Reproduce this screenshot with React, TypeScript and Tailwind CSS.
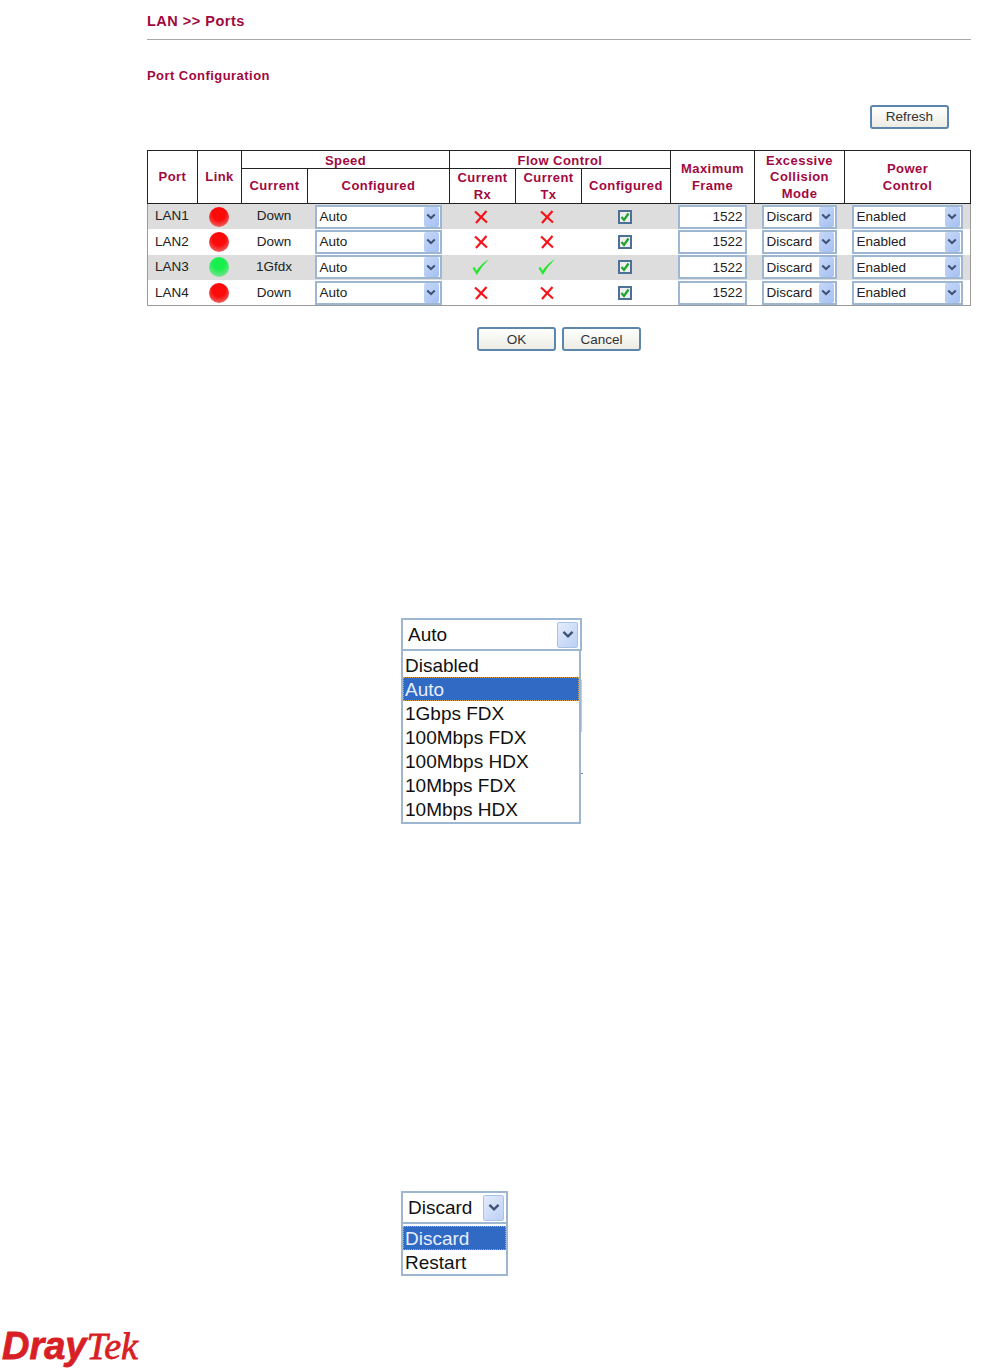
import React from "react";

const Chevron = ({ className }: { className: string }) => (
  <svg viewBox="0 0 10 7" className={className} fill="none" stroke="#3f5375" strokeWidth="2">
    <path d="M1.2 1.4 L5 5 L8.8 1.4" />
  </svg>
);

const Sel = ({ label, className }: { label: string; className: string }) => (
  <div className={`flex h-[24px] items-center justify-between border-2 border-[#9db7d3] bg-white pl-[3px] pr-[1px] text-[13.5px] leading-none text-[#222] ${className}`}>
    <span>{label}</span>
    <span className="flex h-[20px] w-[15px] items-center justify-center rounded-[2px] bg-[linear-gradient(135deg,#c6d8f8,#a5c0f2)]">
      <Chevron className="h-[7px] w-[10px]" />
    </span>
  </div>
);

const Led = ({ on }: { on?: boolean }) => (
  <div
    className={`mx-auto h-[20px] w-[20px] rounded-full ${
      on
        ? "bg-[radial-gradient(circle_at_50%_35%,#18ef4c_35%,#a5dcb2_100%)]"
        : "bg-[radial-gradient(circle_at_50%_35%,#fb0a0a_40%,#e79090_100%)]"
    }`}
  />
);

const Cross = () => (
  <svg viewBox="0 0 14 14" className="mx-auto h-[14px] w-[14px]" fill="none" stroke="#f5141a" strokeWidth="2.2">
    <path d="M1 1.5 L13 12.5 M12.5 1 L2 13" />
  </svg>
);

const Tick = () => (
  <svg viewBox="0 0 18 18" className="mx-auto h-[18px] w-[18px]" fill="#27e62f">
    <path d="M0.5 10 L2.6 9 L4.4 12.8 Q9 6 17 1 Q9.5 8.5 4.8 17 Z" />
  </svg>
);

const Box = () => (
  <div className="mx-auto flex h-[14px] w-[14px] items-center justify-center border-2 border-[#4d7196] bg-[#efefef]">
    <svg viewBox="0 0 10 10" className="h-[10px] w-[10px]" fill="none" stroke="#1fa32c" strokeWidth="2.2">
      <path d="M1.5 5 L4 8 L8.5 1.5" />
    </svg>
  </div>
);

const Btn = ({ label }: { label: string }) => (
  <button className="h-[24px] w-[79px] rounded-[3px] border-2 border-[#5c86ac] bg-[linear-gradient(#ffffff,#ecebe4)] text-[13.5px] leading-none text-[#333]">
    {label}
  </button>
);

const th = "border border-[#222] px-0 pt-[1px] pb-0 text-center align-middle font-bold text-[13px] leading-[16.5px] tracking-[0.45px] text-[#a1093f]";
const thTop = "border border-[#222] px-0 pt-[1px] pb-0 text-center align-middle font-bold text-[13px] leading-[15px] tracking-[0.45px] text-[#a1093f]";

const rows = [
  { port: "LAN1", cur: "Down", on: false },
  { port: "LAN2", cur: "Down", on: false },
  { port: "LAN3", cur: "1Gfdx", on: true },
  { port: "LAN4", cur: "Down", on: false },
];

const Item = ({ label, active }: { label: string; active?: boolean }) => (
  <div
    className={
      active
        ? "h-[24px] border border-dotted border-[#d9a24a] bg-[#316ac5] pl-[1px] leading-[24px] text-[#e8eefc]"
        : "h-[24px] pl-[2px] leading-[26px] text-[#111]"
    }
  >
    {label}
  </div>
);

const Closed = ({ label, className }: { label: string; className: string }) => (
  <div className={`flex h-[33px] items-center justify-between border-2 border-[#9db7d3] bg-white pl-[5px] pr-[2px] ${className}`}>
    <span className="text-[#111]">{label}</span>
    <span className="flex h-[26px] w-[21px] items-center justify-center rounded-[2px] border border-[#a9c2e8] bg-[linear-gradient(135deg,#e3ecfb,#bcd0f5)]">
      <Chevron className="h-[9px] w-[12px]" />
    </span>
  </div>
);

export default function App() {
  return (
    <div className="h-[1368px] w-[983px] overflow-hidden bg-white font-['Liberation_Sans',Arial,sans-serif]">
      <div className="ml-[147px] w-[824px] pt-[12px]">
        <div className="h-[18px] text-[14.5px] font-bold leading-[18px] tracking-[0.5px] text-[#a1093f]">LAN &gt;&gt; Ports</div>
        <div className="mt-[9px] h-[1px] bg-[#a9a9a9]" />
        <div className="mt-[28px] h-[16px] text-[13px] font-bold leading-[16px] tracking-[0.45px] text-[#a1093f]">Port Configuration</div>
        <div className="mt-[21px] flex justify-end pr-[22px]">
          <Btn label="Refresh" />
        </div>
        <table className="mt-[21px] w-[823px] table-fixed border-collapse border border-[#9a9a9a]">
          <colgroup>
            <col className="w-[50px]" />
            <col className="w-[44px]" />
            <col className="w-[66px]" />
            <col className="w-[142px]" />
            <col className="w-[66px]" />
            <col className="w-[66px]" />
            <col className="w-[89px]" />
            <col className="w-[84px]" />
            <col className="w-[90px]" />
            <col className="w-[126px]" />
          </colgroup>
          <thead>
            <tr className="h-[18px]">
              <th rowSpan={2} className={th}>Port</th>
              <th rowSpan={2} className={th}>Link</th>
              <th colSpan={2} className={thTop}>Speed</th>
              <th colSpan={3} className={thTop}>Flow Control</th>
              <th rowSpan={2} className={th}>Maximum<br />Frame</th>
              <th rowSpan={2} className={th}>Excessive<br />Collision<br />Mode</th>
              <th rowSpan={2} className={th}>Power<br />Control</th>
            </tr>
            <tr className="h-[35px]">
              <th className={th}>Current</th>
              <th className={th}>Configured</th>
              <th className={th}>Current<br />Rx</th>
              <th className={th}>Current<br />Tx</th>
              <th className={th}>Configured</th>
            </tr>
          </thead>
          <tbody>
            {rows.map((r, i) => (
              <tr key={r.port} className={`h-[25.6px] text-[13.5px] text-[#222] ${i % 2 === 0 ? "bg-[#dddddd]" : "bg-white"}`}>
                <td className="pl-[7px]">{r.port}</td>
                <td className="pr-[2px]"><Led on={r.on} /></td>
                <td className="pr-[1px] text-center">{r.cur}</td>
                <td className="pl-[7px]"><Sel label="Auto" className="w-[127px]" /></td>
                <td className="pr-[3px]">{r.on ? <Tick /> : <Cross />}</td>
                <td className="pr-[3px]">{r.on ? <Tick /> : <Cross />}</td>
                <td className="pr-[2px]"><Box /></td>
                <td className="pl-[7px]">
                  <div className="flex h-[24px] w-[69px] items-center justify-end border-2 border-[#9db7d3] bg-white pr-[2px] leading-none">1522</div>
                </td>
                <td className="pl-[7px]"><Sel label="Discard" className="w-[75px]" /></td>
                <td className="pl-[7px]"><Sel label="Enabled" className="w-[111px]" /></td>
              </tr>
            ))}
          </tbody>
        </table>
        <div className="mt-[21px] ml-[330px] flex gap-[6px]">
          <Btn label="OK" />
          <Btn label="Cancel" />
        </div>
      </div>

      <div className="relative ml-[401px] mt-[267px] w-[181px] text-[19px]">
        <Closed label="Auto" className="w-[181px]" />
        <div className="w-[180px] border-2 border-t-0 border-[#9db7d3] bg-white pb-[1px] pt-[2px]">
          {["Disabled", "Auto", "1Gbps FDX", "100Mbps FDX", "100Mbps HDX", "10Mbps FDX", "10Mbps HDX"].map((t) => (
            <Item key={t} label={t} active={t === "Auto"} />
          ))}
        </div>
        <div className="absolute left-[180px] top-[62px] h-[52px] w-[1px] bg-[#c9c9c9]" />
        <div className="absolute left-[180px] top-[155px] h-[1px] w-[2px] bg-[#888]" />
      </div>

      <div className="ml-[401px] mt-[367px] w-[107px] text-[19px]">
        <Closed label="Discard" className="w-[107px]" />
        <div className="border-2 border-t-0 border-[#9db7d3] bg-white pt-[2px]">
          <Item label="Discard" active />
          <Item label="Restart" />
        </div>
      </div>

      <div className="ml-[2px] mt-[48px] whitespace-nowrap text-[38px] leading-[44px] text-[#d81f26] [-webkit-text-stroke:0.8px_#d81f26]">
        <span className="font-['Liberation_Sans',sans-serif] font-bold italic">Dray</span>
        <span className="font-['Liberation_Serif',serif] italic">Tek</span>
      </div>
    </div>
  );
}
